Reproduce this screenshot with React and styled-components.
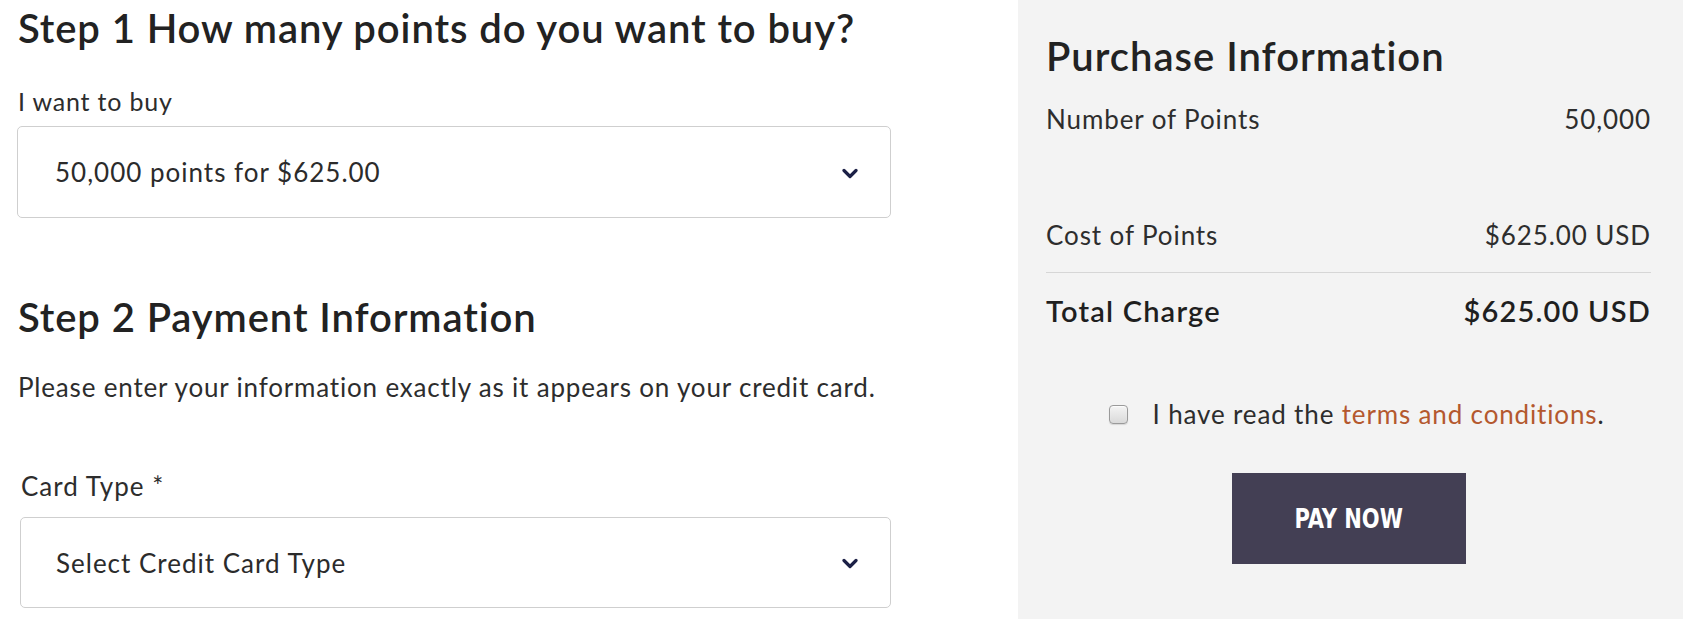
import React from "react";
import styled, { createGlobalStyle } from "styled-components";

const GlobalStyle = createGlobalStyle`
  html, body { margin: 0; padding: 0; background: #ffffff; }
  body { font-family: "Lato", "Open Sans", sans-serif; color: #2a2a2a; }
  * { box-sizing: border-box; }
`;

const Page = styled.div`
  display: grid;
  grid-template-columns: 874px 665px;
  column-gap: 127px;
  padding: 0 2px 0 17px;
  width: 1685px;
  height: 625px;
  overflow: hidden;
`;

const FormColumn = styled.div`
  display: flex;
  flex-direction: column;
  padding-top: 4px;
`;

const StepTitle = styled.h2`
  margin: ${(p) => p.$mt || 0}px 0 0 1px;
  font-size: 40px;
  line-height: 48px;
  font-weight: 600;
  color: #222222;
  letter-spacing: 0.9px;
`;

const FieldLabel = styled.label`
  display: block;
  margin: ${(p) => p.$mt || 0}px 0 0 ${(p) => p.$ml || 1}px;
  font-size: ${(p) => p.$size || 24}px;
  letter-spacing: ${(p) => p.$ls || 0.9}px;
  line-height: 1.2;
  color: #2d2d2d;
`;

const Intro = styled.p`
  margin: 31px 0 0 1px;
  font-size: 26px;
  letter-spacing: 0.82px;
  line-height: 1.2;
  color: #2d2d2d;
`;

const FieldGroup = styled.div`
  display: flex;
  flex-direction: column;
  padding-left: ${(p) => p.$indent || 0}px;
`;

const SelectBox = styled.div`
  margin-top: ${(p) => p.$mt || 0}px;
  height: ${(p) => p.$h || 92}px;
  display: flex;
  align-items: center;
  justify-content: space-between;
  border: 1.5px solid #cfcfcf;
  border-radius: 5px;
  background: #ffffff;
  padding: 2px 32px 0 ${(p) => p.$pl || 37}px;
  font-size: 26px;
  letter-spacing: 1px;
  line-height: 1.2;
  color: #2b2b2b;
`;

const Chevron = () => (
  <svg width="16" height="11" viewBox="0 0 16 11" aria-hidden="true">
    <polyline
      points="2,2.5 8,8.5 14,2.5"
      fill="none"
      stroke="#1c2046"
      strokeWidth="3.2"
      strokeLinecap="round"
      strokeLinejoin="round"
    />
  </svg>
);

const SummaryPanel = styled.aside`
  background: #f3f3f3;
  height: 619px;
  padding: 32px 32px 0 28px;
  display: flex;
  flex-direction: column;
`;

const PanelTitle = styled.h2`
  margin: 0;
  font-size: 40px;
  line-height: 48px;
  font-weight: 600;
  letter-spacing: 1px;
  color: #222222;
`;

const SummaryRow = styled.div`
  display: flex;
  justify-content: space-between;
  align-items: baseline;
  margin-top: ${(p) => p.$mt || 0}px;
  font-size: ${(p) => (p.$total ? 29 : 26)}px;
  font-weight: ${(p) => (p.$total ? 600 : 400)};
  letter-spacing: ${(p) => (p.$total ? 1.2 : 0.9)}px;
  line-height: 1.2;
  color: ${(p) => (p.$total ? "#1f1f1f" : "#2d2d2d")};
`;

const Divider = styled.hr`
  margin: 21px 0 0;
  border: 0;
  border-top: 1px solid #d6d6d6;
  height: 0;
`;

const AgreeRow = styled.label`
  margin-top: 70px;
  display: flex;
  align-items: center;
  justify-content: center;
  gap: 25px;
  font-size: 26px;
  letter-spacing: 0.85px;
  line-height: 1.2;
  color: #2d2d2d;
  padding-left: 16px;
`;

const Check = styled.input.attrs({ type: "checkbox" })`
  appearance: none;
  -webkit-appearance: none;
  margin: 0;
  width: 19px;
  height: 19px;
  border: 1px solid #9a9a9a;
  border-radius: 4px;
  background: linear-gradient(#f4f4f4, #d9d9d9);
  box-shadow: inset 0 1px 1px rgba(255, 255, 255, 0.8), 0 1px 1px rgba(0, 0, 0, 0.12);
  flex: none;
`;

const TermsLink = styled.a`
  color: #b4582e;
  text-decoration: none;
`;

const PayButton = styled.button`
  align-self: center;
  margin-top: 43px;
  width: 234px;
  height: 91px;
  border: 0;
  border-radius: 0;
  background: #433f54;
  color: #ffffff;
  font-family: "DejaVu Sans Condensed", "DejaVu Sans", sans-serif;
  font-weight: 700;
  font-size: 27px;
  text-transform: uppercase;
  cursor: pointer;
  padding: 0;
`;

const ButtonLabel = styled.span`
  display: inline-block;
  transform: scaleX(0.865);
`;

export default function App() {
  return (
    <>
      <GlobalStyle />
      <Page>
        <FormColumn>
          <StepTitle>Step 1 How many points do you want to buy?</StepTitle>
          <FieldLabel $mt={34} $size={25} $ls={0.8}>I want to buy</FieldLabel>
          <SelectBox $mt={10} $h={92} $pl={37}>
            <span>50,000 points for $625.00</span>
            <Chevron />
          </SelectBox>

          <StepTitle $mt={75}>Step 2 Payment Information</StepTitle>
          <Intro>Please enter your information exactly as it appears on your credit card.</Intro>

          <FieldGroup $indent={3}>
            <FieldLabel $mt={68} $size={26} $ls={1}>Card Type *</FieldLabel>
            <SelectBox $mt={15} $h={91} $pl={35}>
              <span>Select Credit Card Type</span>
              <Chevron />
            </SelectBox>
          </FieldGroup>
        </FormColumn>

        <SummaryPanel>
          <PanelTitle>Purchase Information</PanelTitle>
          <SummaryRow $mt={24}>
            <span>Number of Points</span>
            <span>50,000</span>
          </SummaryRow>
          <SummaryRow $mt={85}>
            <span>Cost of Points</span>
            <span>$625.00 USD</span>
          </SummaryRow>
          <Divider />
          <SummaryRow $total $mt={21}>
            <span>Total Charge</span>
            <span>$625.00 USD</span>
          </SummaryRow>
          <AgreeRow>
            <Check />
            <span>
              I have read the <TermsLink href="#">terms and conditions</TermsLink>.
            </span>
          </AgreeRow>
          <PayButton type="button">
            <ButtonLabel>Pay Now</ButtonLabel>
          </PayButton>
        </SummaryPanel>
      </Page>
    </>
  );
}
